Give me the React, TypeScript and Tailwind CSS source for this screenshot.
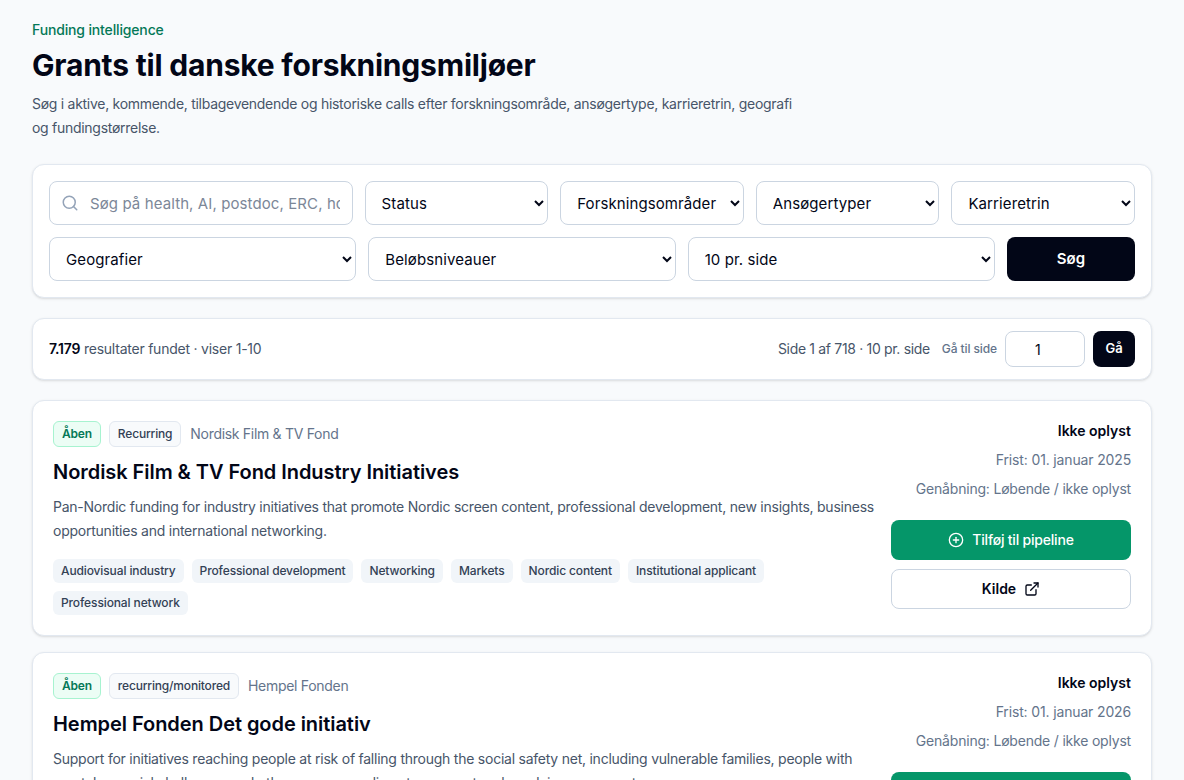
import { CirclePlus, ExternalLink, Search } from 'lucide-react';

const FONT = "font-['Inter','Noto_Sans',sans-serif]";

const CALLS = [
  {
    kind: 'Recurring',
    funder: 'Nordisk Film & TV Fond',
    title: 'Nordisk Film & TV Fond Industry Initiatives',
    text: 'Pan-Nordic funding for industry initiatives that promote Nordic screen content, professional development, new insights, business opportunities and international networking.',
    tags: ['Audiovisual industry', 'Professional development', 'Networking', 'Markets', 'Nordic content', 'Institutional applicant', 'Professional network'],
    deadline: 'Frist: 01. januar 2025',
  },
  {
    kind: 'recurring/monitored',
    funder: 'Hempel Fonden',
    title: 'Hempel Fonden Det gode initiativ',
    text: 'Support for initiatives reaching people at risk of falling through the social safety net, including vulnerable families, people with mental or social challenges and other groups needing stronger networks, advice or support.',
    tags: ['Social initiatives', 'Vulnerable groups', 'Civil society'],
    deadline: 'Frist: 01. januar 2026',
  },
];

function Select({ label }: { label: string }) {
  return (
    <select className="h-11 w-full min-w-0 rounded-lg border border-[#cbd5e1] bg-white pr-1 pl-3 text-[15px] tracking-[0.1px] text-[#020617]">
      <option>{label}</option>
    </select>
  );
}

function CallCard({ call }: { call: (typeof CALLS)[number] }) {
  return (
    <article className="flex gap-2 rounded-xl border border-[#e2e8f0] bg-white p-5 shadow-sm">
      <div className="min-w-0 flex-1">
        <div className="flex items-center gap-2">
          <span className="flex h-[26px] items-center rounded-md border border-[#a7f3d0] bg-[#ecfdf5] px-2 text-xs font-semibold tracking-[-0.2px] text-[#047857]">Åben</span>
          <span className="flex h-[26px] items-center rounded-md border border-[#e2e8f0] bg-[#f8fafc] px-2 text-xs font-medium tracking-[-0.18px] text-[#334155]">{call.kind}</span>
          <span className="ml-px text-sm tracking-[-0.3px] text-[#64748b]">{call.funder}</span>
        </div>
        <h2 className="mt-[11px] text-xl leading-7 font-semibold tracking-[-0.05px] text-[#020617]">{call.title}</h2>
        <p className="mt-[9px] text-sm leading-6 tracking-[-0.24px] text-[#475569]">{call.text}</p>
        <div className="mt-4 flex flex-wrap gap-2">
          {call.tags.map((tag) => (
            <span key={tag} className="flex h-6 items-center rounded-md bg-[#f1f5f9] px-2 text-xs font-medium tracking-[-0.12px] text-[#334155]">{tag}</span>
          ))}
        </div>
      </div>
      <div className="flex w-60 shrink-0 flex-col items-end text-sm">
        <p className="leading-5 font-semibold text-[#020617]">Ikke oplyst</p>
        <p className="mt-[9px] leading-5 tracking-[-0.15px] text-[#64748b]">{call.deadline}</p>
        <p className="mt-[9px] leading-5 tracking-[-0.2px] text-[#64748b]">Genåbning: Løbende / ikke oplyst</p>
        <button className="mt-[21px] flex h-10 w-full items-center justify-center gap-2 rounded-lg bg-[#059669] font-medium tracking-[-0.2px] text-white">
          <CirclePlus className="h-4 w-4" />
          Tilføj til pipeline
        </button>
        <button className="mt-[9px] flex h-10 w-full items-center justify-center gap-2 rounded-lg border border-[#cbd5e1] bg-white font-semibold text-[#020617]">
          Kilde
          <ExternalLink className="h-4 w-4" />
        </button>
      </div>
    </article>
  );
}

export default function App() {
  return (
    <div className={`${FONT} h-[780px] overflow-hidden bg-[#f8fafc] px-8 pt-[20px]`}>
      <p className="text-sm leading-5 font-medium tracking-[-0.15px] text-[#047857]">Funding intelligence</p>
      <h1 className="mt-[7px] text-[30px] leading-9 font-bold tracking-[-0.2px] text-[#020617]">Grants til danske forskningsmiljøer</h1>
      <p className="mt-[9px] max-w-[768px] text-sm leading-6 tracking-[-0.28px] text-[#475569]">
        Søg i aktive, kommende, tilbagevendende og historiske calls efter forskningsområde, ansøgertype, karrieretrin, geografi og fundingstørrelse.
      </p>

      <section className="mt-6 flex flex-col gap-3 rounded-xl border border-[#e2e8f0] bg-white p-4 shadow-sm">
        <div className="grid grid-cols-[303.6px_repeat(4,1fr)] gap-3">
          <label className="flex h-11 items-center gap-[11px] rounded-lg border border-[#cbd5e1] bg-white pr-3 pl-[11px]">
            <Search className="h-[18px] w-[18px] shrink-0 text-[#94a3b8]" />
            <input
              className="w-full min-w-0 bg-transparent pt-[2px] text-[15px] tracking-[0.1px] outline-none placeholder:text-[#7c8798]"
              placeholder="Søg på health, AI, postdoc, ERC, horizon"
            />
          </label>
          <Select label="Status" />
          <Select label="Forskningsområder" />
          <Select label="Ansøgertyper" />
          <Select label="Karrieretrin" />
        </div>
        <div className="grid grid-cols-[1fr_1fr_1fr_128px] gap-3">
          <Select label="Geografier" />
          <Select label="Beløbsniveauer" />
          <Select label="10 pr. side" />
          <button className="h-11 rounded-lg bg-[#020617] text-[15px] font-semibold text-white">Søg</button>
        </div>
      </section>

      <section className="mt-5 flex h-[62px] items-center justify-between rounded-xl border border-[#e2e8f0] bg-white px-4 shadow-sm">
        <p className="text-sm tracking-[-0.23px] text-[#475569]">
          <span className="font-semibold text-[#020617]">7.179</span> resultater fundet · viser 1-10
        </p>
        <div className="flex items-center">
          <span className="text-sm tracking-[-0.33px] text-[#475569]">Side 1 af 718 · 10 pr. side</span>
          <span className="ml-3 text-xs font-medium tracking-[-0.1px] text-[#64748b]">Gå til side</span>
          <input
            defaultValue="1"
            className="ml-2 h-9 w-20 rounded-lg border border-[#cbd5e1] bg-white pl-[29px] text-sm text-[#020617] outline-none"
          />
          <button className="ml-2 h-9 w-[42px] rounded-lg bg-[#020617] text-[13px] font-semibold text-white">Gå</button>
        </div>
      </section>

      <div className="mt-5 flex flex-col gap-4">
        {CALLS.map((call) => (
          <CallCard key={call.title} call={call} />
        ))}
      </div>
    </div>
  );
}
